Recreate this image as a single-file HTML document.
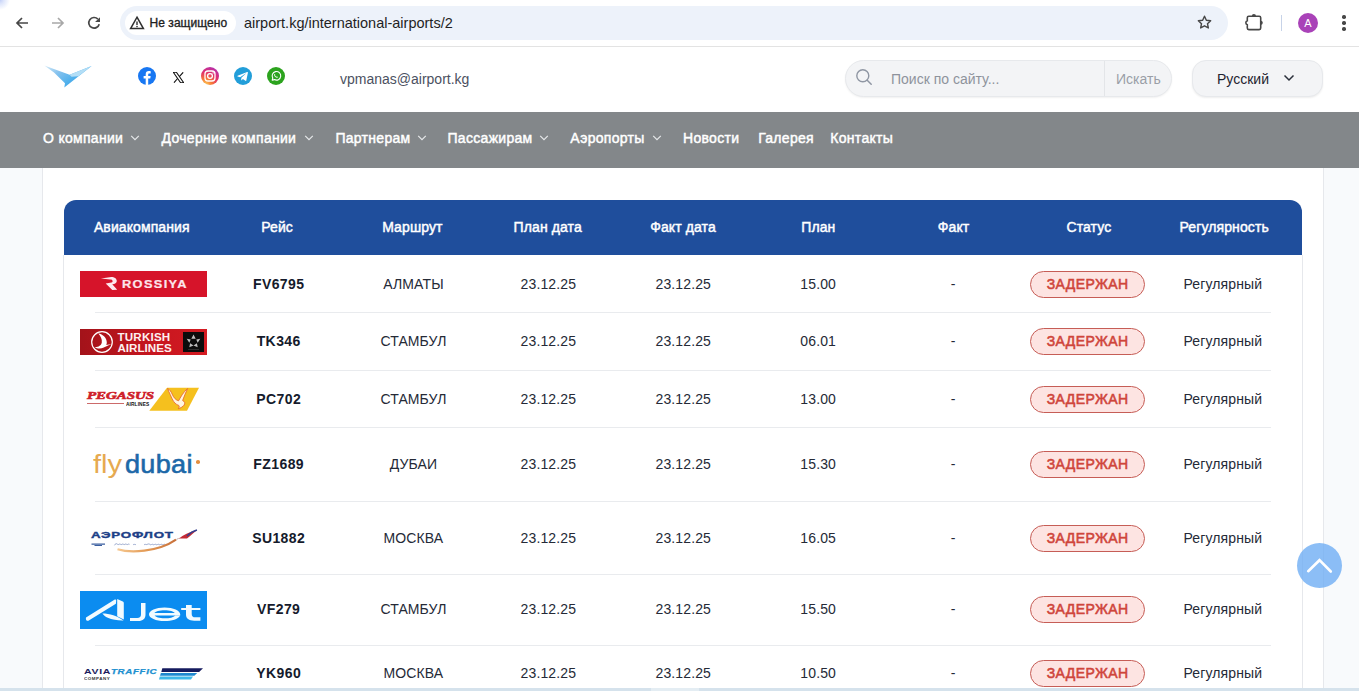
<!DOCTYPE html>
<html><head><meta charset="utf-8"><style>
*{box-sizing:border-box;margin:0;padding:0}
html,body{width:1359px;height:691px;overflow:hidden}
body{position:relative;background:#f8fafc;font-family:"Liberation Sans",sans-serif;color:#1c2230}
.a{position:absolute}
.t{position:absolute;white-space:nowrap;line-height:1}
#chrome{position:absolute;left:0;top:0;width:1359px;height:47px;background:#fff;border-bottom:1px solid #e3e3e3}
#addr{position:absolute;left:120px;top:6px;width:1108px;height:34px;border-radius:17px;background:#edf2fa}
#chip{position:absolute;left:125px;top:11px;width:111px;height:24px;border-radius:12px;background:#fff}
#hdr{position:absolute;left:0;top:47px;width:1359px;height:65px;background:#fff}
#nav{position:absolute;left:0;top:112px;width:1359px;height:56px;background:#83878a}
.nv{position:absolute;top:131px;color:#fff;font-weight:normal;-webkit-text-stroke:0.45px #fff;font-size:14px;letter-spacing:0.3px;white-space:nowrap;line-height:14px}
.chev{position:absolute;top:134px}
#cont{position:absolute;left:42px;top:168px;width:1282px;height:523px;background:#fff;border-left:1px solid #e6e8ec;border-right:1px solid #e6e8ec}
#thead{position:absolute;left:64px;top:200px;width:1238px;height:55px;background:#1f4e9c;border-radius:12px 12px 0 0}
#tbody{position:absolute;left:63px;top:255px;width:1240px;height:440px;border-left:1px solid #e6e8ec;border-right:1px solid #e6e8ec}
.th{position:absolute;top:220px;width:136px;text-align:center;color:#fff;font-weight:normal;-webkit-text-stroke:0.45px #fff;font-size:14px;letter-spacing:0.1px;line-height:14px;white-space:nowrap}
.sep{position:absolute;left:95px;width:1176px;height:1px;background:#e9ebee}
.td{position:absolute;width:136px;text-align:center;font-size:14px;line-height:14px;white-space:nowrap;color:#252a37;letter-spacing:0.12px;text-indent:0.12px}
.b{font-weight:bold;color:#151b2c;letter-spacing:0.4px;text-indent:0.4px}
.badge{position:absolute;left:1030px;width:115px;height:27px;border:1px solid #c65d56;background:#fde4e2;border-radius:14px;color:#cf453b;font-weight:normal;-webkit-text-stroke:0.55px #cf453b;letter-spacing:0.4px;text-indent:0.4px;font-size:14px;line-height:25px;text-align:center}
#bottom{position:absolute;left:0;top:688px;width:1359px;height:3px;background:#d5e2ec}
</style></head><body>
<div id="chrome">
<div class="a" style="left:0;top:0;width:14px;height:12px;background:radial-gradient(circle at 0 0,rgba(195,208,248,1) 0,rgba(215,224,250,0.8) 4px,rgba(255,255,255,0) 10px)"></div>
<svg class="a" style="left:14px;top:15px" width="16" height="16" viewBox="0 0 16 16"><path d="M14 8H3M8 3L3 8l5 5" fill="none" stroke="#474747" stroke-width="1.7"/></svg>
<svg class="a" style="left:50px;top:15px" width="16" height="16" viewBox="0 0 16 16"><path d="M2 8h11M8 3l5 5-5 5" fill="none" stroke="#a8a8a8" stroke-width="1.7"/></svg>
<svg class="a" style="left:86px;top:15px" width="16" height="16" viewBox="0 0 16 16"><path d="M13.2 9.2A5.3 5.3 0 1 1 11.9 4.1" fill="none" stroke="#474747" stroke-width="1.7"/><path d="M14 2.2v4.9H9.1z" fill="#474747"/></svg>
<div id="addr"></div>
<div id="chip"></div>
<svg class="a" style="left:129px;top:15px" width="16" height="16" viewBox="0 0 16 16"><path d="M8 2.2L14.4 13.6H1.6z" fill="none" stroke="#303030" stroke-width="1.5" stroke-linejoin="miter"/><path d="M8 6.5v3.6" stroke="#303030" stroke-width="1.4"/><circle cx="8" cy="11.6" r="0.8" fill="#303030"/></svg>
<div class="t" style="left:149.5px;top:17px;font-size:12px;-webkit-text-stroke:0.35px #1f1f1f;letter-spacing:0.05px;color:#1f1f1f">Не защищено</div>
<div class="t" style="left:244px;top:16px;font-size:14.5px;color:#1f1f1f">airport.kg/international-airports/2</div>
<svg class="a" style="left:1196px;top:14px" width="17" height="17" viewBox="0 0 24 24"><path d="M12 3.2l2.6 5.6 6.1.7-4.5 4.2 1.2 6-5.4-3-5.4 3 1.2-6-4.5-4.2 6.1-.7z" fill="none" stroke="#474747" stroke-width="2" stroke-linejoin="round"/></svg>
<svg class="a" style="left:1244px;top:12px" width="22" height="22" viewBox="0 0 22 22"><path d="M3.3 5.7a1.5 1.5 0 0 1 1.5-1.5H15.2a1.5 1.5 0 0 1 1.5 1.5V16.1a1.5 1.5 0 0 1-1.5 1.5H4.8a1.5 1.5 0 0 1-1.5-1.5V12.8A2.1 2.1 0 0 1 3.3 8.8z" fill="none" stroke="#474747" stroke-width="1.6"/><path d="M7.8 4.2a2.1 2.1 0 0 1 4.2 0z" fill="#474747"/><path d="M16.7 8.7a2.1 2.1 0 0 1 0 4.2z" fill="#474747"/></svg>
<div class="a" style="left:1281px;top:15px;width:1px;height:16px;background:#c7d3e8"></div>
<div class="a" style="left:1298px;top:13px;width:20px;height:20px;border-radius:50%;background:#a942b8"></div>
<div class="t" style="left:1298px;top:18px;width:20px;text-align:center;font-size:11px;color:#fff">A</div>
<div class="a" style="left:1342.3px;top:15.3px;width:3.4px;height:3.4px;border-radius:50%;background:#474747"></div>
<div class="a" style="left:1342.3px;top:21.3px;width:3.4px;height:3.4px;border-radius:50%;background:#474747"></div>
<div class="a" style="left:1342.3px;top:27.3px;width:3.4px;height:3.4px;border-radius:50%;background:#474747"></div>
</div>
<div id="hdr"></div>
<svg class="a" style="left:40px;top:60px" width="56" height="32" viewBox="40 60 56 32">
<defs><linearGradient id="lg1" x1="0" y1="0" x2="1" y2="0.6"><stop offset="0" stop-color="#d6ecf8"/><stop offset="0.35" stop-color="#86c2ee"/><stop offset="0.7" stop-color="#4fb0ec"/><stop offset="1" stop-color="#3d98de"/></linearGradient></defs>
<path d="M44.4 65.6 L69.6 74.8 L91.6 66 L64.3 87.6 L65 83.3 L54 72.5 Z" fill="url(#lg1)"/>
<path d="M69.6 74.8 L91.6 66 L78.4 76.2 L71.5 76.8 Z" fill="#b3def6"/>
</svg>
<svg class="a" style="left:137px;top:66px" width="20" height="20" viewBox="0 0 20 20"><circle cx="10" cy="10" r="9" fill="#1877f2"/><path d="M11.2 19V12.6h2.1l.35-2.5H11.2V8.6c0-.7.25-1.2 1.2-1.2h1.3V5.2c-.25 0-1-.1-1.9-.1-1.9 0-3.1 1.1-3.1 3.2v1.8H6.6v2.5h2.1V19z" fill="#fff"/></svg>
<svg class="a" style="left:173px;top:72px" width="11" height="11" viewBox="0 0 11 11"><path d="M0.3 0.3h3.1l7.3 10.4H7.6z" fill="none" stroke="#111" stroke-width="1.1"/><path d="M1 10.7L4.6 6.5M6.3 4.6L10.2 0.3" stroke="#111" stroke-width="1.1"/></svg>
<svg class="a" style="left:200px;top:66px" width="20" height="20" viewBox="0 0 20 20"><defs><radialGradient id="ig" cx="0.25" cy="1" r="1.2"><stop offset="0" stop-color="#fdd05a"/><stop offset="0.3" stop-color="#f77737"/><stop offset="0.6" stop-color="#e1306c"/><stop offset="1" stop-color="#a32fc8"/></radialGradient></defs><circle cx="10" cy="10" r="9" fill="url(#ig)"/><rect x="5" y="5" width="10" height="10" rx="3" fill="none" stroke="#fff" stroke-width="1.3"/><circle cx="10" cy="10" r="2.4" fill="none" stroke="#fff" stroke-width="1.3"/><circle cx="13.1" cy="6.9" r="0.7" fill="#fff"/></svg>
<svg class="a" style="left:233px;top:66px" width="20" height="20" viewBox="0 0 20 20"><circle cx="10" cy="10" r="9" fill="#229ed9"/><path d="M4.6 9.8l9.6-3.8c.45-.17.85.1.7.8l-1.6 7.6c-.12.55-.45.68-.9.42l-2.5-1.85-1.2 1.16c-.13.13-.25.24-.5.24l.18-2.55 4.6-4.2c.2-.18-.04-.28-.3-.1L7.1 11.3 4.65 10.5c-.53-.17-.54-.53.1-.75z" fill="#fff"/></svg>
<svg class="a" style="left:266px;top:66px" width="20" height="20" viewBox="0 0 20 20"><circle cx="10" cy="10" r="9" fill="#2ca31e"/><path d="M6.2 14.2l.6-2.1a4.3 4.3 0 1 1 1.6 1.5z" fill="none" stroke="#fff" stroke-width="1.1" stroke-linejoin="round"/><path d="M8.3 8.2c.2-.4.5-.4.7 0l.3.7-.3.5c.3.6.8 1.1 1.4 1.4l.5-.3.7.3c.4.2.4.5 0 .8-.5.4-1.5.2-2.4-.6-.9-.9-1.2-2-.9-2.8z" fill="#fff"/></svg>
<div class="t" style="left:340px;top:72px;font-size:14px;color:#4b5161">vpmanas@airport.kg</div>
<div class="a" style="left:845px;top:60px;width:327px;height:37px;border-radius:18.5px;background:#f3f4f6;border:1px solid #e7e9ec;box-shadow:0 1px 2px rgba(0,0,0,0.06)"></div>
<svg class="a" style="left:855px;top:68px" width="18" height="18" viewBox="0 0 18 18"><circle cx="7.8" cy="7.8" r="6" fill="none" stroke="#8f96a3" stroke-width="1.4"/><path d="M12.2 12.2l4 4" stroke="#8f96a3" stroke-width="1.5" stroke-linecap="round"/></svg>
<div class="t" style="left:891px;top:72px;font-size:14px;color:#8e939c">Поиск по сайту...</div>
<div class="a" style="left:1104px;top:61px;width:1px;height:35px;background:#e3e5e8"></div>
<div class="t" style="left:1116px;top:72px;font-size:14px;color:#9a9fa7">Искать</div>
<div class="a" style="left:1192px;top:60px;width:131px;height:37px;border-radius:14px;background:#f3f4f6;border:1px solid #e7e9ec;box-shadow:0 1px 2px rgba(0,0,0,0.07)"></div>
<div class="t" style="left:1217px;top:72px;font-size:14px;color:#1f2430">Русский</div>
<svg class="a" style="left:1283px;top:74px" width="12" height="8" viewBox="0 0 12 8"><path d="M1.5 1.5L6 6l4.5-4.5" fill="none" stroke="#2a2f3a" stroke-width="1.5"/></svg>

<div id="nav"></div>
<div class="nv" style="left:43px">О компании</div>
<svg class="chev" style="left:129.5px" width="10" height="8" viewBox="0 0 10 8"><path d="M1.2 1.8L5 5.6 8.8 1.8" fill="none" stroke="#e6e8ea" stroke-width="1.2"/></svg>
<div class="nv" style="left:161.5px">Дочерние компании</div>
<svg class="chev" style="left:304.0px" width="10" height="8" viewBox="0 0 10 8"><path d="M1.2 1.8L5 5.6 8.8 1.8" fill="none" stroke="#e6e8ea" stroke-width="1.2"/></svg>
<div class="nv" style="left:335.4px">Партнерам</div>
<svg class="chev" style="left:417.3px" width="10" height="8" viewBox="0 0 10 8"><path d="M1.2 1.8L5 5.6 8.8 1.8" fill="none" stroke="#e6e8ea" stroke-width="1.2"/></svg>
<div class="nv" style="left:447.5px">Пассажирам</div>
<svg class="chev" style="left:538.5px" width="10" height="8" viewBox="0 0 10 8"><path d="M1.2 1.8L5 5.6 8.8 1.8" fill="none" stroke="#e6e8ea" stroke-width="1.2"/></svg>
<div class="nv" style="left:570.3px">Аэропорты</div>
<svg class="chev" style="left:652.1px" width="10" height="8" viewBox="0 0 10 8"><path d="M1.2 1.8L5 5.6 8.8 1.8" fill="none" stroke="#e6e8ea" stroke-width="1.2"/></svg>
<div class="nv" style="left:683px">Новости</div>
<div class="nv" style="left:758.2px">Галерея</div>
<div class="nv" style="left:830.3px">Контакты</div>
<div id="cont"></div><div id="thead"></div><div id="tbody"></div>
<div class="th" style="left:73.8px">Авиакомпания</div>
<div class="th" style="left:209.1px">Рейс</div>
<div class="th" style="left:344.4px">Маршрут</div>
<div class="th" style="left:479.7px">План дата</div>
<div class="th" style="left:615.0px">Факт дата</div>
<div class="th" style="left:750.3px">План</div>
<div class="th" style="left:885.6px">Факт</div>
<div class="th" style="left:1020.9px">Статус</div>
<div class="th" style="left:1156.2px">Регулярность</div>
<div class="sep" style="top:312px"></div>
<div class="sep" style="top:370px"></div>
<div class="sep" style="top:427px"></div>
<div class="sep" style="top:501px"></div>
<div class="sep" style="top:574px"></div>
<div class="sep" style="top:645px"></div>
<div class="td b" style="left:210.5px;top:277.0px">FV6795</div>
<div class="td" style="left:345.4px;top:277.0px">АЛМАТЫ</div>
<div class="td" style="left:480.3px;top:277.0px">23.12.25</div>
<div class="td" style="left:615.2px;top:277.0px">23.12.25</div>
<div class="td" style="left:750.1px;top:277.0px">15.00</div>
<div class="td" style="left:885.0px;top:277.0px">-</div>
<div class="td" style="left:1154.8px;top:277.0px">Регулярный</div>
<div class="badge" style="top:271px">ЗАДЕРЖАН</div>
<div class="td b" style="left:210.5px;top:334.0px">TK346</div>
<div class="td" style="left:345.4px;top:334.0px">СТАМБУЛ</div>
<div class="td" style="left:480.3px;top:334.0px">23.12.25</div>
<div class="td" style="left:615.2px;top:334.0px">23.12.25</div>
<div class="td" style="left:750.1px;top:334.0px">06.01</div>
<div class="td" style="left:885.0px;top:334.0px">-</div>
<div class="td" style="left:1154.8px;top:334.0px">Регулярный</div>
<div class="badge" style="top:328px">ЗАДЕРЖАН</div>
<div class="td b" style="left:210.5px;top:392.0px">PC702</div>
<div class="td" style="left:345.4px;top:392.0px">СТАМБУЛ</div>
<div class="td" style="left:480.3px;top:392.0px">23.12.25</div>
<div class="td" style="left:615.2px;top:392.0px">23.12.25</div>
<div class="td" style="left:750.1px;top:392.0px">13.00</div>
<div class="td" style="left:885.0px;top:392.0px">-</div>
<div class="td" style="left:1154.8px;top:392.0px">Регулярный</div>
<div class="badge" style="top:386px">ЗАДЕРЖАН</div>
<div class="td b" style="left:210.5px;top:457.0px">FZ1689</div>
<div class="td" style="left:345.4px;top:457.0px">ДУБАИ</div>
<div class="td" style="left:480.3px;top:457.0px">23.12.25</div>
<div class="td" style="left:615.2px;top:457.0px">23.12.25</div>
<div class="td" style="left:750.1px;top:457.0px">15.30</div>
<div class="td" style="left:885.0px;top:457.0px">-</div>
<div class="td" style="left:1154.8px;top:457.0px">Регулярный</div>
<div class="badge" style="top:451px">ЗАДЕРЖАН</div>
<div class="td b" style="left:210.5px;top:531.0px">SU1882</div>
<div class="td" style="left:345.4px;top:531.0px">МОСКВА</div>
<div class="td" style="left:480.3px;top:531.0px">23.12.25</div>
<div class="td" style="left:615.2px;top:531.0px">23.12.25</div>
<div class="td" style="left:750.1px;top:531.0px">16.05</div>
<div class="td" style="left:885.0px;top:531.0px">-</div>
<div class="td" style="left:1154.8px;top:531.0px">Регулярный</div>
<div class="badge" style="top:525px">ЗАДЕРЖАН</div>
<div class="td b" style="left:210.5px;top:602.0px">VF279</div>
<div class="td" style="left:345.4px;top:602.0px">СТАМБУЛ</div>
<div class="td" style="left:480.3px;top:602.0px">23.12.25</div>
<div class="td" style="left:615.2px;top:602.0px">23.12.25</div>
<div class="td" style="left:750.1px;top:602.0px">15.50</div>
<div class="td" style="left:885.0px;top:602.0px">-</div>
<div class="td" style="left:1154.8px;top:602.0px">Регулярный</div>
<div class="badge" style="top:596px">ЗАДЕРЖАН</div>
<div class="td b" style="left:210.5px;top:666.0px">YK960</div>
<div class="td" style="left:345.4px;top:666.0px">МОСКВА</div>
<div class="td" style="left:480.3px;top:666.0px">23.12.25</div>
<div class="td" style="left:615.2px;top:666.0px">23.12.25</div>
<div class="td" style="left:750.1px;top:666.0px">10.50</div>
<div class="td" style="left:885.0px;top:666.0px">-</div>
<div class="td" style="left:1154.8px;top:666.0px">Регулярный</div>
<div class="badge" style="top:660px">ЗАДЕРЖАН</div>
<div class="a" style="left:1297px;top:543px;width:45px;height:45px;border-radius:50%;background:rgba(108,172,244,0.78)"></div>
<svg class="a" style="left:1297px;top:543px" width="45" height="45" viewBox="0 0 45 45"><path d="M11.2 28.2L22.5 17.2 33.8 28.5" fill="none" stroke="#fff" stroke-width="2.6" stroke-linecap="round"/></svg>
<div id="bottom"></div><div class="a" style="left:651px;top:688px;width:48px;height:3px;background:#e4edf3"></div>
<div class="a" style="left:80px;top:271px;width:127px;height:26px;background:#d6142a"></div>
<svg class="a" style="left:100px;top:276px" width="19" height="16" viewBox="0 0 19 16"><path d="M0.9 2.4L11.3 0.9C14.5 0.9 16.8 2.5 16.8 5 16.8 7 15 8.2 12.3 8.3L17.2 13.7 12.3 14 5.7 7.5 11.5 6.5C12.5 6.2 12.8 5.5 12.5 4.7 12.2 4 11.5 3.6 10.5 3.6z" fill="#fde8ee"/></svg>
<div class="t" style="left:121.5px;top:280px;font-size:10.5px;font-weight:bold;letter-spacing:1.1px;color:#fde4ea;-webkit-text-stroke:0.2px #fde4ea;line-height:8px;transform:scaleX(1.22);transform-origin:0 0">ROSSIYA</div>
<div class="a" style="left:80px;top:329px;width:127px;height:26px;background:linear-gradient(90deg,#a3131a,#c8161f 60%,#d41b22)"></div>
<svg class="a" style="left:90px;top:330px" width="24" height="24" viewBox="0 0 24 24"><circle cx="12" cy="12" r="10.3" fill="none" stroke="#fff" stroke-width="1.2"/><path d="M8.2 3.3C13 4.3 16.8 8 16.8 12.5c0 1-.2 1.8-.5 2.5l5-1-7.5 3.6c-3 1.4-6.8 1.3-9-.6 3.2.3 6.5-1.6 7-4.6.5-3.1-1.2-6.4-3.6-9.1z" fill="#fff"/></svg>
<div class="t" style="left:117.5px;top:332px;font-size:11.6px;font-weight:bold;letter-spacing:0.2px;color:#fdf0f0;line-height:9.5px">TURKISH</div>
<div class="t" style="left:117.5px;top:343px;font-size:11.6px;font-weight:bold;letter-spacing:0px;color:#fdf0f0;line-height:9.5px">AIRLINES</div>
<div class="a" style="left:183px;top:332px;width:21px;height:20px;background:#0c0c0c"></div>
<svg class="a" style="left:183px;top:332px" width="21" height="20" viewBox="0 0 21 20"><path d="M10.5 2.5l2.2 4.3h-4.4z M17.3 6.8l-2.6 3.9-1.4-3.3z M14.7 15.2l-4.2-1.6 3.4-2.4z M6.3 15.2l.8-4 3.4 2.4z M3.7 6.8l4 .6-1.4 3.3z" fill="#bdbdbd"/><path d="M5 17.5h11" stroke="#444" stroke-width="0.6"/></svg>
<div class="t" style="left:86.5px;top:392px;font-family:'Liberation Serif',serif;font-size:10.5px;font-weight:bold;font-style:italic;color:#cf1f2b;-webkit-text-stroke:0.6px #cf1f2b;line-height:8px;transform:scaleX(1.42);transform-origin:0 0">PEGASUS</div>
<div class="a" style="left:86.5px;top:403px;width:37px;height:1.2px;background:#cc6a6a"></div>
<div class="t" style="left:125.5px;top:402.5px;font-size:4.6px;font-weight:bold;color:#111;line-height:4px;letter-spacing:0.1px;transform:scaleX(1.05);transform-origin:0 0">AIRLINES</div>
<svg class="a" style="left:148px;top:386px" width="53" height="26" viewBox="0 0 53 26"><path d="M19 1.7h32L39 24.7H1.3z" fill="#f5c01e"/><path d="M19.5 2.5c2 1 3.6 3 4.6 5.5 1.5 3.5 3.5 6 6.5 6.8 1.8-3.2 4.5-8.5 9-12.3-1.6 3.6-3.6 8-5 12 2.3 1 2.6 3 1.5 4.6-1.2 1.6-3.6 3-5.8 3.6 1-1.2 1.2-2.5.5-3.3-2.8-.8-5-3-6.6-6.5-1.2-2.6-2.6-5.6-4.7-10.4z" fill="#fff6e0" stroke="#e4602c" stroke-width="0.8"/></svg>
<div class="t" style="left:92.5px;top:451px;font-size:26px;color:#e6aa50;line-height:26px;transform:scaleX(1.12);transform-origin:0 0">fly</div>
<div class="t" style="left:125px;top:451px;font-size:26px;font-weight:normal;color:#1c68a8;-webkit-text-stroke:0.6px #1c68a8;line-height:26px;letter-spacing:0.3px;transform:scaleX(1.04);transform-origin:0 0">dubai</div>
<div class="a" style="left:196.3px;top:460px;width:3.6px;height:3.6px;border-radius:50%;background:#e49040"></div>
<div class="t" style="left:91px;top:531px;font-size:8.6px;font-weight:bold;color:#1c3f87;-webkit-text-stroke:0.35px #1c3f87;line-height:8px;letter-spacing:0.5px;transform:scaleX(1.55);transform-origin:0 0">АЭРОФЛОТ</div>
<svg class="a" style="left:86px;top:522px" width="116" height="34" viewBox="0 0 116 34">
<defs><linearGradient id="afg" x1="0" y1="0" x2="1" y2="0"><stop offset="0" stop-color="#f6c890"/><stop offset="0.5" stop-color="#e39a55"/><stop offset="1" stop-color="#c8703a"/></linearGradient></defs>
<path d="M5.5 22.2h13.5M8.5 23.5h7.5" stroke="#3b5fa0" stroke-width="1.2"/>
<path d="M28.5 23.3c1-2 2-2 3-1s2-1 3 0 2-1 3 0 2-1 3 0 2-1 3 0M47 23c1-1.5 2 0 3-.5M58 23c1-1.5 2 0 3-.5s2-1 3 0 2-1 3 0 2-1 3 0 2-1 3 0 2-1 3 0 2-1 3 0" stroke="#90a0c8" stroke-width="0.9" fill="none"/>
<path d="M31.5 27.2c12 3.8 40 3.3 58.5-9.5" fill="none" stroke="url(#afg)" stroke-width="2.2"/><path d="M90 17.7c1.5-1 3-1.5 4-1.6" stroke="#e0c8c0" stroke-width="0.8"/>
<path d="M93 16.5c4-3.5 10-6.5 18-8.5-3 2.5-6 5.5-10 8.5z" fill="#c52a35"/>
<path d="M101 14c3-3 6-5 10-6" stroke="#34408f" stroke-width="1.6" fill="none"/>
</svg>
<div class="a" style="left:80px;top:591px;width:127px;height:38px;background:#0b8cf0"></div>
<svg class="a" style="left:80px;top:591px" width="127" height="38" viewBox="0 0 127 38">
<path d="M6 26.4L34.8 8.6c.9-.5 1.5-.1 1.4.9l-.3 3.2L8.8 29.6c-1.6.9-3.5-.6-2.8-3.2z" fill="#f2fbff"/>
<path d="M37.2 8l5.6 2.6c.6.3 1 .8 1 1.5V28.5l-6.6-3.2z" fill="#f2fbff"/>
<path d="M22.4 22.4c7 0 15 2.5 21.2 7-5 .2-11.5-.6-15.8-2.6-2.4-1.2-4-2.6-5.4-4.4z" fill="#f2fbff"/>
<path d="M61 11.9h4.5V23.5c0 4.2-2.6 6.5-7.2 6.5H50v-3h7.2c2.6 0 3.8-1.2 3.8-3.8z" fill="#f2fbff"/>
<path d="M84.6 16.4c8.7 0 15.6 3 15.6 6.8v1.3H74.6c1 1.5 4.6 2.8 10 2.8 5.2 0 8.8-1 10.6-2.6h4.8c-2 3.6-8 5.3-15.4 5.3-8.8 0-15.6-3-15.6-6.8s6.8-6.8 15.6-6.8zm0 2.8c-5.2 0-9.2 1.2-10.2 2.9h20.4c-1-1.7-5-2.9-10.2-2.9z" fill="#f2fbff"/>
<path d="M106 14h5.7v3h8.7v2.1h-8.7v3.8c0 2.2 1.2 3.4 3.6 3.4h5.1v3.4h-6.2c-5.4 0-8.2-2.2-8.2-6.2v-4.4h-4.8V17h4.8z" fill="#f2fbff"/>
</svg>
<div class="t" style="left:84.3px;top:668.5px;font-size:7.5px;font-weight:bold;color:#1b1b5e;line-height:6px;letter-spacing:0.5px;transform:scaleX(1.4);transform-origin:0 0">AVIA</div>
<div class="t" style="left:110.5px;top:668.5px;font-size:7.5px;font-weight:bold;font-style:italic;color:#2090d0;-webkit-text-stroke:0.25px #2090d0;line-height:6px;letter-spacing:0.5px;transform:scaleX(1.3);transform-origin:0 0">TRAFFIC</div>
<div class="t" style="left:83.8px;top:677px;font-size:4.3px;font-weight:bold;color:#333;line-height:4px;letter-spacing:0.5px;transform:scaleX(1.05);transform-origin:0 0">COMPANY</div>
<svg class="a" style="left:158px;top:667px" width="48" height="15" viewBox="0 0 48 15"><path d="M4.3 1.3H45L41.1 5H3.3z" fill="#141a5e"/><path d="M2.9 5.9h36.3l-2.8 2.9H2z" fill="#1e88cf"/><path d="M1.8 9.5h33.2l-2 3.1H1z" fill="#3cb7e8"/></svg>
</body></html>
